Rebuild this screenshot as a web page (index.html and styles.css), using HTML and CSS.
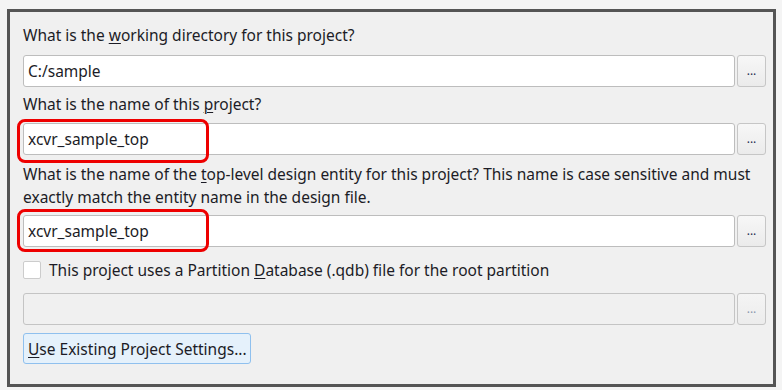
FILE: index.html
```html
<!DOCTYPE html>
<html>
<head>
<meta charset="utf-8">
<link rel="stylesheet" href="styles.css">
</head>
<body>
<div class="frame">
  <div class="label l1">What is the <u>w</u>orking directory for this project?</div>
  <div class="row">
    <div class="field"><input class="input" type="text" value="C:/sample"></div>
    <button class="browse">...</button>
  </div>
  <div class="label l2">What is the name of this <u>p</u>roject?</div>
  <div class="row">
    <div class="field"><input class="input" type="text" value="xcvr_sample_top"><span class="highlight hl1"></span></div>
    <button class="browse">...</button>
  </div>
  <div class="label l3">What is the name of the <u>t</u>op-level design entity for this project? This name is case sensitive and must exactly match the entity name in the design file.</div>
  <div class="row">
    <div class="field"><input class="input" type="text" value="xcvr_sample_top"><span class="highlight hl2"></span></div>
    <button class="browse">...</button>
  </div>
  <div class="check-row">
    <span class="checkbox"></span>
    <span class="check-text">This project uses a Partition <u>D</u>atabase (.qdb) file for the root partition</span>
  </div>
  <div class="row">
    <div class="field"><input class="input disabled" type="text" value="" disabled></div>
    <button class="browse disabled">...</button>
  </div>
  <button class="action"><u>U</u>se Existing Project Settings...</button>
</div>
</body>
</html>
```
FILE: styles.css
```css
html, body {
  margin: 0;
  padding: 0;
  background: #f4f4f4;
}
body {
  padding: 9px 6px 3px 7px;
  font-family: "Noto Sans", "Open Sans", sans-serif;
  font-size: 15.5px;
  color: #1c1c26;
}
.frame {
  border: 3px solid #555555;
  background: #f0f0f0;
  height: 378px;
  box-sizing: border-box;
  padding: 12px 7px 0 13px;
  display: flex;
  flex-direction: column;
}
.label {
  line-height: 23px;
  margin-bottom: 8px;
}
.label.l2 {
  margin-top: 6px;
  margin-bottom: 7px;
}
.label.l3 {
  margin-top: 8px;
  margin-bottom: 6px;
}
.label u, .check-text u, .action u {
  text-decoration-thickness: 1px;
  text-underline-offset: 2px;
}
.row {
  display: flex;
  gap: 2px;
  height: 32px;
}
.field {
  position: relative;
  flex: 1;
  display: flex;
}
.input {
  flex: 1;
  box-sizing: border-box;
  height: 32px;
  margin: 0;
  border: 1px solid #bdbdbd;
  border-radius: 3px;
  background: #ffffff;
  font: inherit;
  color: inherit;
  padding: 0 4px;
  outline: none;
}
.input.disabled {
  background: #f0f0f0;
  border-color: #c4c4c4;
}
.highlight {
  position: absolute;
  left: -6px;
  width: 192px;
  box-sizing: border-box;
  border: 3px solid #ee0000;
  border-radius: 8px;
}
.hl1 {
  top: -4px;
  height: 44px;
}
.hl2 {
  top: -6px;
  height: 43px;
}
.browse {
  width: 29px;
  height: 32px;
  box-sizing: border-box;
  margin: 0;
  padding: 0 0 1px 0;
  border: 1px solid #c6c6c6;
  border-radius: 3px;
  background: linear-gradient(#f7f7f7, #ebebeb);
  font-family: "Noto Sans", sans-serif;
  font-size: 12px;
  font-weight: normal;
  line-height: 1;
  color: #1f2f4f;
  letter-spacing: 0;
}
.browse.disabled {
  color: #8b98ad;
  background: linear-gradient(#f4f4f4, #ececec);
}
.check-row {
  display: flex;
  align-items: center;
  gap: 8px;
  height: 18px;
  margin-top: 14px;
  margin-bottom: 14px;
  line-height: 18px;
}
.checkbox {
  width: 18px;
  height: 18px;
  box-sizing: border-box;
  border: 1px solid #cccccc;
  border-radius: 2px;
  background: #ffffff;
}
.action {
  align-self: flex-start;
  margin-top: 8px;
  height: 31px;
  width: 228px;
  box-sizing: border-box;
  border: 1px solid #8fc0ee;
  border-radius: 3px;
  background: #e5f1fb;
  font: inherit;
  color: inherit;
  padding: 0 4px;
  text-align: left;
  white-space: nowrap;
}
```
